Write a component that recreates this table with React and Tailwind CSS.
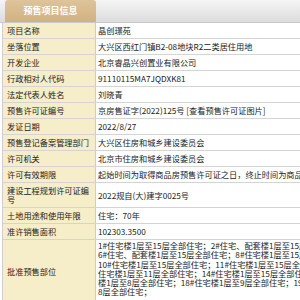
const rows = [
    { label: '项目名称', value: '晶创璟苑' },
    { label: '坐落位置', value: '大兴区西红门镇B2-08地块R2二类居住用地' },
    { label: '开发企业', value: '北京睿晶兴创置业有限公司' },
    { label: '行政相对人代码', value: '91110115MA7JQDXK81' },
    { label: '法定代表人姓名', value: '刘晓青' },
    { label: '预售许可证编号', value: '京房售证字(2022)125号 [查看预售许可证图片]' },
    { label: '发证日期', value: '2022/8/27' },
    { label: '预售登记备案管理部门', value: '大兴区住房和城乡建设委员会' },
    { label: '许可机关', value: '北京市住房和城乡建设委员会' },
    { label: '许可有效期限', value: '起始时间为取得商品房预售许可证之日，终止时间为商品住宅' },
    { label: '建设工程规划许可证编号', value: '2022规自(大)建字0025号', tall: true },
    { label: '土地用途和使用年限', value: '住宅：70年' },
    { label: '准许销售面积', value: '102303.3500' },
];

const parts = [
    '1#住宅楼1层至15层全部住宅；2#住宅、配套楼1层至15层',
    '6#住宅、配套楼1层至15层全部住宅；8#住宅楼1层至15层',
    '10#住宅楼1层至15层全部住宅；11#住宅楼1层至15层全部',
    '住宅楼1层至11层全部住宅；14#住宅楼1层至15层全部住宅',
    '楼1层至8层全部住宅；18#住宅楼1层至9层全部住宅；19#',
    '8层全部住宅；',
];

const App = () => {
    return (
        <div className="w-[300px] h-[300px] overflow-hidden bg-white text-[#222] font-['Noto_Sans_CJK_SC',sans-serif]">
            {/* tab bar */}
            <div className="h-[23px] flex items-end pl-[5px] bg-gradient-to-b from-[#f5f5f5] to-[#dcdcdc] border-b border-[#c9c9c9]">
                <div className="w-[91px] h-[22px] rounded-t-[3px] bg-gradient-to-b from-[#dec49a] to-[#d1b182] text-white font-bold text-[9px] flex items-center justify-center">
                    预售项目信息
                </div>
            </div>

            <div className="ml-[2px] w-[298px] border-l border-[#cfcfcf] text-[8.2px] leading-[9px]">
                {rows.map((row) => (
                    <div
                        key={row.label}
                        className={`flex border-b border-[#d4d4d4] ${row.tall ? 'h-[25px]' : 'h-[16px]'}`}
                    >
                        <div className="w-[93px] shrink-0 bg-[#f6edc9] border-r border-[#d9cfa6] px-[4px] flex items-center">
                            <span className="w-[84px]">{row.label}</span>
                        </div>
                        <div className="flex-1 min-w-0 pl-[2px] flex items-center whitespace-nowrap overflow-hidden">{row.value}</div>
                    </div>
                ))}
                <div className="flex h-[62px]">
                    <div className="w-[93px] shrink-0 bg-[#f6edc9] border-r border-[#d9cfa6] px-[4px] flex items-center">
                        批准预售部位
                    </div>
                    <div className="flex-1 min-w-0 pl-[2px] pt-[1px] leading-[9.3px] whitespace-nowrap overflow-hidden">
                        {parts.map((p, i) => (
                            <div key={i}>{p}</div>
                        ))}
                    </div>
                </div>
            </div>
        </div>
    );
};

export default App;
